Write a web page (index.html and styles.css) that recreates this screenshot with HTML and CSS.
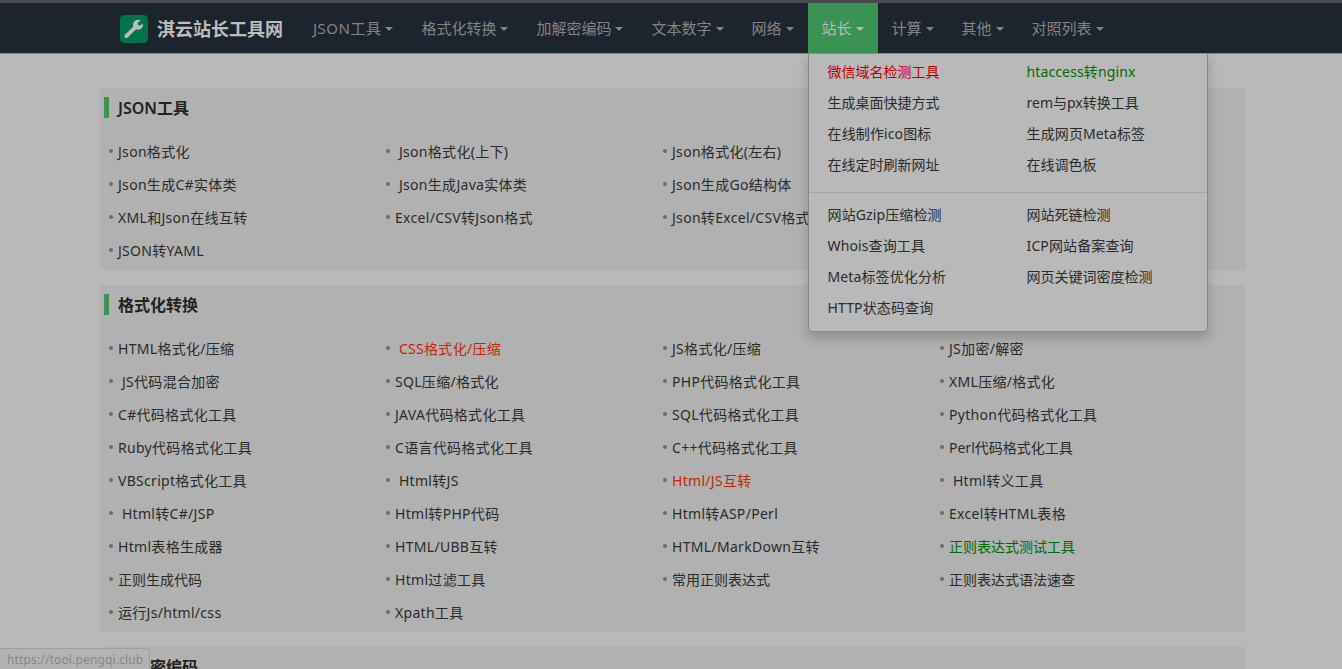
FILE: index.html
```html
<!DOCTYPE html>
<html lang="zh-CN">
<head>
  <meta charset="UTF-8">
  <title>淇云站长工具网</title>
  <link rel="stylesheet" href="styles.css">
</head>
<body>
  <header class="navbar">
    <a class="logo" href="#">
      <svg class="logo-icon" viewBox="0 0 28 28">
        <rect width="28" height="28" rx="4.5" fill="#007448"/>
        <path d="M6.3 21.2 15 12.6" stroke="#bdbdbd" stroke-width="3.8" stroke-linecap="round"/>
        <path d="M20.8 5.6A5 5 0 1 0 22.9 8.600L20.200 10.600 17.900 10.100 17.700 7.700Z" fill="#bdbdbd"/>
      </svg>
      <span>淇云站长工具网</span>
    </a>
    <nav class="menu">
      <a class="json" href="#">JSON工具<i class="caret"></i></a>
      <a href="#">格式化转换<i class="caret"></i></a>
      <a href="#">加解密编码<i class="caret"></i></a>
      <a href="#">文本数字<i class="caret"></i></a>
      <a href="#">网络<i class="caret"></i></a>
      <div class="open">
        <a class="active" href="#">站长<i class="caret"></i></a>
        <div class="dropdown">
          <ul>
            <li class="cn red">微信域名检测工具</li>
            <li class="green">htaccess转nginx</li>
            <li class="cn">生成桌面快捷方式</li>
            <li class="cn">rem与px转换工具</li>
            <li>在线制作ico图标</li>
            <li>生成网页Meta标签</li>
            <li class="cn">在线定时刷新网址</li>
            <li class="cn">在线调色板</li>
          </ul>
          <ul>
            <li>网站Gzip压缩检测</li>
            <li class="cn">网站死链检测</li>
            <li>Whois查询工具</li>
            <li>ICP网站备案查询</li>
            <li>Meta标签优化分析</li>
            <li class="cn">网页关键词密度检测</li>
            <li>HTTP状态码查询</li>
          </ul>
        </div>
      </div>
      <a href="#">计算<i class="caret"></i></a>
      <a href="#">其他<i class="caret"></i></a>
      <a href="#">对照列表<i class="caret"></i></a>
    </nav>
  </header>

  <main>
    <section class="panel">
      <h2>JSON工具</h2>
      <ul class="tools">
        <li>Json格式化</li>
        <li>&nbsp;Json格式化(上下)</li>
        <li>Json格式化(左右)</li>
        <li class="empty"></li>
        <li>Json生成C#实体类</li>
        <li>&nbsp;Json生成Java实体类</li>
        <li>Json生成Go结构体</li>
        <li class="empty"></li>
        <li>XML和Json在线互转</li>
        <li>Excel/CSV转Json格式</li>
        <li>Json转Excel/CSV格式</li>
        <li class="empty"></li>
        <li>JSON转YAML</li>
      </ul>
    </section>

    <section class="panel">
      <h2>格式化转换</h2>
      <ul class="tools">
        <li>HTML格式化/压缩</li>
        <li class="hot">&nbsp;CSS格式化/压缩</li>
        <li>JS格式化/压缩</li>
        <li>JS加密/解密</li>
        <li>&nbsp;JS代码混合加密</li>
        <li>SQL压缩/格式化</li>
        <li>PHP代码格式化工具</li>
        <li>XML压缩/格式化</li>
        <li>C#代码格式化工具</li>
        <li>JAVA代码格式化工具</li>
        <li>SQL代码格式化工具</li>
        <li>Python代码格式化工具</li>
        <li>Ruby代码格式化工具</li>
        <li>C语言代码格式化工具</li>
        <li>C++代码格式化工具</li>
        <li class="cn">Perl代码格式化工具</li>
        <li>VBScript格式化工具</li>
        <li>&nbsp;Html转JS</li>
        <li class="hot">Html/JS互转</li>
        <li>&nbsp;Html转义工具</li>
        <li>&nbsp;Html转C#/JSP</li>
        <li>Html转PHP代码</li>
        <li>Html转ASP/Perl</li>
        <li>Excel转HTML表格</li>
        <li>Html表格生成器</li>
        <li>HTML/UBB互转</li>
        <li>HTML/MarkDown互转</li>
        <li class="cn green">正则表达式测试工具</li>
        <li class="cn">正则生成代码</li>
        <li>Html过滤工具</li>
        <li class="cn">常用正则表达式</li>
        <li class="cn">正则表达式语法速查</li>
        <li>运行Js/html/css</li>
        <li>Xpath工具</li>
      </ul>
    </section>

    <section class="panel last">
      <h2>加解密编码</h2>
    </section>
  </main>

  <div class="status">https://tool.pengqi.club</div>
</body>
</html>
```
FILE: styles.css
```css
* {
  box-sizing: border-box;
}
body {
  margin: 0;
  height: 669px;
  overflow: hidden;
  background-color: #b9b9b9;
  color: #2b2b2b;
  font-family: "Noto Sans", "Noto Sans CJK SC", sans-serif;
  font-size: 14px;
}
ul {
  list-style: none;
  margin: 0;
  padding: 0;
}
a {
  text-decoration: none;
}
.navbar {
  display: flex;
  height: 54px;
  padding-left: 120px;
  border-top: 3px solid #4a494d;
  border-bottom: 1px solid #858689;
  background-color: #1c242e;
}
.logo {
  display: flex;
  align-items: center;
  width: 179px;
  color: #bdbdbd;
  font-size: 18px;
  font-weight: bold;
  white-space: nowrap;
}
.logo-icon {
  width: 28px;
  height: 28px;
  margin: 2px 9px 0 0;
  fill: none;
}
.menu {
  display: flex;
}
.menu a {
  display: flex;
  align-items: center;
  height: 50px;
  padding: 0 14px 2px;
  color: #848484;
  font-size: 15px;
  white-space: nowrap;
}
.menu .json {
  letter-spacing: 0.5px;
}
.menu .active {
  background-color: #3a9352;
  color: #b9b9b9;
}
.caret {
  margin: 4px 0 0 4px;
  border-top: 4px solid;
  border-left: 4px solid transparent;
  border-right: 4px solid transparent;
}
.open {
  position: relative;
}
.dropdown {
  position: absolute;
  top: 50px;
  left: 0;
  z-index: 10;
  width: 400px;
  height: 279px;
  border: 1px solid #8a8a8a;
  border-radius: 0 0 4px 4px;
  background-color: #b9b9b9;
  box-shadow: 0 6px 12px rgba(0, 0, 0, 0.2);
}
.dropdown ul {
  display: grid;
  grid-template-columns: 199px 199px;
  grid-auto-rows: 31px;
  padding: 2px 0 12px;
}
.dropdown ul + ul {
  padding-top: 6px;
  border-top: 1px solid #a5a5a5;
}
.dropdown li {
  padding-left: 19px;
  letter-spacing: 0.12px;
  line-height: 31px;
  white-space: nowrap;
}
main {
  width: 1145px;
  margin: 34px 0 0 100px;
}
.panel {
  margin-bottom: 15px;
  padding: 9px 0 4px 4px;
  background-color: #b1b1b1;
}
.panel h2 {
  height: 21px;
  margin: 0 0 16px;
  padding-left: 9px;
  border-left: 5px solid #3a9352;
  color: #222;
  font-size: 16px;
  font-weight: 600;
  line-height: 22px;
}
.last {
  height: 22px;
  margin-bottom: 0;
  overflow: hidden;
}
.tools {
  display: grid;
  grid-template-columns: repeat(4, 277px);
  grid-auto-rows: 33px;
}
.tools li {
  display: flex;
  align-items: center;
  padding-left: 5px;
  letter-spacing: 0.3px;
  white-space: nowrap;
}
.tools li::before {
  content: "";
  width: 4px;
  height: 4px;
  margin: 0 5px 0 0;
  border-radius: 50%;
  background-color: #6c6c6c;
}
.tools .cn,
.dropdown .cn {
  letter-spacing: 0;
}
.tools .empty {
  visibility: hidden;
}
.tools .hot {
  color: #c4260a;
}
.green {
  color: #006b00;
}
.red {
  color: #c00000;
}
.status {
  position: fixed;
  left: 0;
  bottom: 0;
  width: 150px;
  height: 21px;
  padding-left: 7px;
  border: 1px solid #a0a0a0;
  border-left: 0;
  border-bottom: 0;
  border-radius: 0 4px 0 0;
  background-color: #b3b3b3;
  color: #85878b;
  font-size: 12px;
  letter-spacing: 0.15px;
  line-height: 22px;
}
```
